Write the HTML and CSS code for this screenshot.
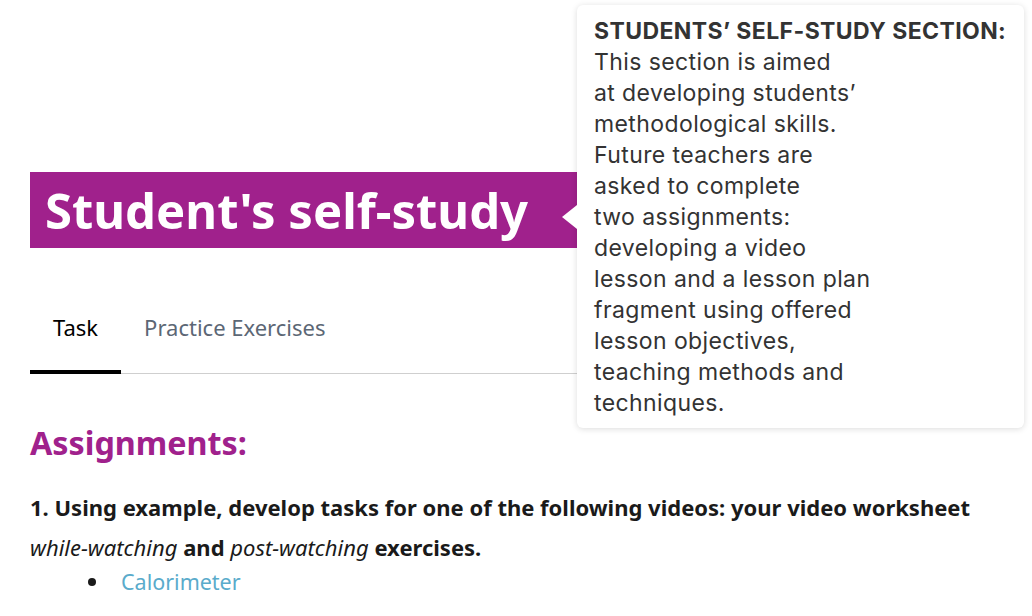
FILE: index.html
```html
<!DOCTYPE html>
<html lang="en">
<head>
<meta charset="utf-8">
<title>Student's self-study</title>
<link rel="stylesheet" href="styles.css">
</head>
<body>
<main class="page">
  <div class="banner-row">
    <h1 class="banner">Student's self-study</h1>
  </div>
  <nav class="tabs">
    <a class="tab active">Task</a>
    <a class="tab">Practice Exercises</a>
  </nav>
  <section class="content">
    <h2 class="heading">Assignments:</h2>
    <p class="task"><b>1. Using example, develop tasks for one of the following videos: your video worksheet</b><br><i>while-watching</i> <b>and</b> <i>post-watching</i> <b>exercises.</b></p>
    <ul class="links">
      <li><a class="link">Calorimeter</a></li>
    </ul>
  </section>
</main>
<div class="tooltip">
  <span class="tip-arrow"></span>
  <p class="tip-text"><b>STUDENTS’ SELF-STUDY SECTION:</b><br>This section is aimed<br>at developing students’<br>methodological skills.<br>Future teachers are<br>asked to complete<br>two assignments:<br>developing a video<br>lesson and a lesson plan<br>fragment using offered<br>lesson objectives,<br>teaching methods and<br>techniques.</p>
</div>
</body>
</html>
```
FILE: styles.css
```css
html, body {
  margin: 0;
  padding: 0;
  background: #fff;
  overflow: hidden;
}
body {
  font-family: "Noto Sans", "Open Sans", sans-serif;
  color: #1a1a1a;
  width: 1032px;
  height: 616px;
  position: relative;
}
.page {
  padding: 172px 0 0 30px;
}
.banner-row {
  display: flex;
}
.banner {
  margin: 0;
  background: #a0218c;
  color: #fff;
  font-size: 49px;
  font-weight: 700;
  line-height: 76px;
  height: 76px;
  width: 547px;
  padding-left: 15px;
  box-sizing: border-box;
  white-space: nowrap;
}
.tabs {
  display: flex;
  margin-top: 65px;
  border-bottom: 1px solid #cfcfcf;
  width: 560px;
}
.tab {
  font-size: 22px;
  line-height: 28px;
  padding: 0 23px 29px 23px;
  color: #5c6775;
  border-bottom: 4px solid transparent;
  margin-bottom: -1px;
}
.tab.active {
  color: #000;
  border-bottom-color: #000;
}
.content {
  padding-top: 46px;
}
.heading {
  margin: 0;
  color: #a0218c;
  font-size: 32.3px;
  line-height: 44px;
  font-weight: 700;
}
.task {
  margin: 23px 0 0 0;
  font-size: 22px;
  line-height: 40px;
  color: #1a1a1a;
}
.task b { font-weight: 700; }
.task i { font-weight: 400; }
.links {
  margin: 0;
  padding-left: 58px;
  list-style: none;
  font-size: 21.5px;
  line-height: 30px;
}
.links li::before {
  content: "";
  display: inline-block;
  width: 8px;
  height: 8px;
  border-radius: 50%;
  background: #1a1a1a;
  margin-right: 25px;
  vertical-align: middle;
  position: relative;
  top: -2px;
}
.link {
  color: #5aabcb;
}
.tooltip {
  position: absolute;
  left: 577px;
  top: 5px;
  width: 447px;
  height: 423px;
  background: #fff;
  border-radius: 6px;
  box-shadow: 0 1px 6px rgba(0,0,0,0.14);
  box-sizing: border-box;
  padding: 11px 0 0 17px;
}
.tip-arrow {
  position: absolute;
  left: -15px;
  top: 200px;
  width: 0;
  height: 0;
  border-top: 12px solid transparent;
  border-bottom: 12px solid transparent;
  border-right: 15px solid #fff;
}
.tip-text {
  margin: 0;
  font-family: Inter, "Noto Sans", sans-serif;
  font-size: 23px;
  line-height: 31px;
  letter-spacing: 0.4px;
  color: #333;
}
.tip-text b { font-weight: 700; }
```
